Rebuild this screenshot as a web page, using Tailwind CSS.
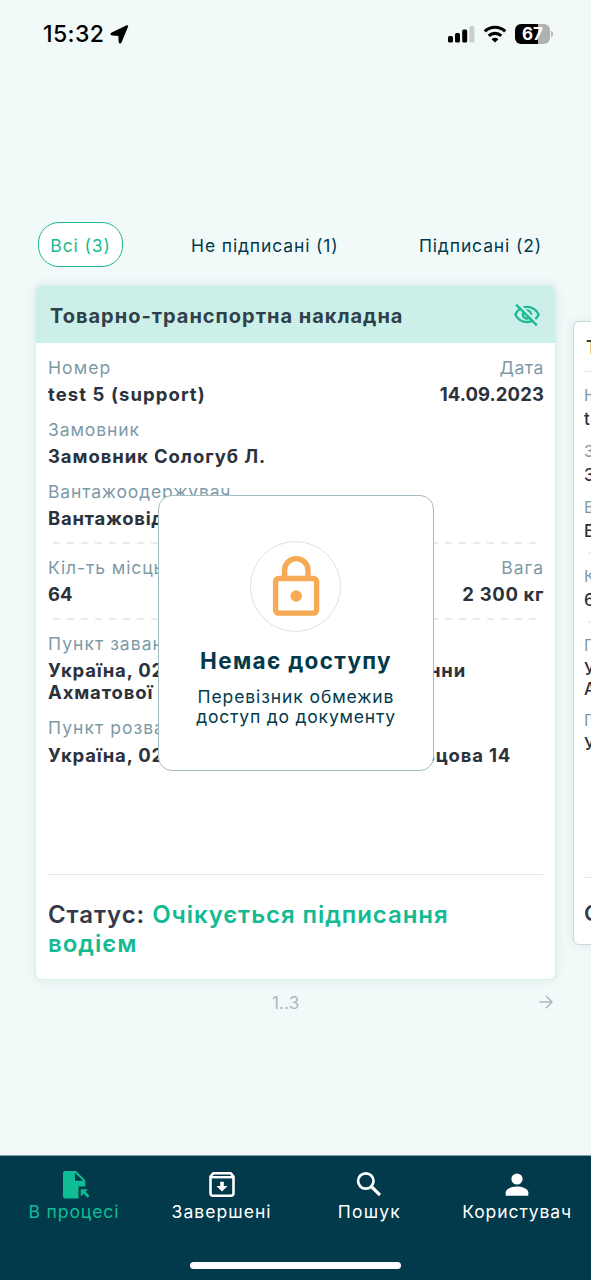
<!DOCTYPE html>
<html lang="uk">
<head>
<meta charset="utf-8">
<title>Документи</title>
<script src="https://cdn.jsdelivr.net/npm/@tailwindcss/browser@4"></script>
</head>
<body class="bg-[#f1faf9]">
<div class="relative flex h-[1280px] w-[591px] flex-col overflow-hidden bg-[#f1faf9] font-[Inter,sans-serif] text-[17.5px] whitespace-nowrap text-[#023a4c]">

  <!-- Status bar -->
  <div class="flex h-[68px] shrink-0 items-center justify-between pr-[38px] pl-[43px] text-black">
    <div class="flex items-center gap-[6px]">
      <span class="text-[23px] font-medium tracking-[0.4px]">15:32</span>
      <svg class="h-[19px] w-[19px]" viewBox="0 0 19 19"><path d="M17.2 1.2 10.7 16.9Q10 18.3 9.6 16.6L9.3 9.9 2.4 9.6Q.6 9.2 2.1 8.4Z" fill="#000" stroke="#000" stroke-width="2" stroke-linejoin="round"/></svg>
    </div>
    <div class="flex items-center">
      <svg class="h-[18px] w-[28px]" viewBox="0 0 28 18"><rect x="1" y="11" width="5" height="6.5" rx="1.5"/><rect x="8" y="8" width="5" height="9.5" rx="1.5"/><rect x="15.2" y="4.5" width="5" height="13" rx="1.5"/><rect x="22.4" y="1" width="5" height="16.5" rx="1.5" fill="#c9cfce"/></svg>
      <svg class="ml-[8px] h-[18px] w-[24px]" viewBox="0 0 24 18" fill="none" stroke="#000" stroke-width="3.2"><path d="M1.8 6.4a14.6 14.6 0 0 1 20.4 0"/><path d="M5.8 10.8a8.9 8.9 0 0 1 12.4 0"/><path d="M12 17.6 8.6 14.2a4.8 4.8 0 0 1 6.8 0Z" fill="#000" stroke="none"/></svg>
      <div class="ml-[8px] flex h-[20px] w-[35px] items-center justify-center rounded-[6px] bg-linear-to-r from-black from-[67%] to-[#aeb3b2] to-[67%] pt-px text-[17px] leading-[19px] font-bold text-white">67</div>
      <div class="ml-px h-[6px] w-[2px] rounded-r-full bg-[#b4bab9]"></div>
    </div>
  </div>

  <!-- Filter tabs -->
  <div class="mt-[154px] ml-[38px] flex h-[45px] w-[508px] shrink-0 items-center tracking-[0.87px]">
    <div class="flex h-[45px] w-[85px] items-center justify-center rounded-[21px] border-[1.5px] border-[#1db992] bg-white pt-[3px] text-[#1abb92]">Всі (3)</div>
    <div class="pt-[3px] pl-[68px]">Не підписані (1)</div>
    <div class="mr-[4px] ml-auto pt-[3px]">Підписані (2)</div>
  </div>

  <!-- Document cards -->
  <div class="mt-[19px] ml-[36px] flex w-[620px] shrink-0 items-start gap-[18px]">
    <div class="relative flex h-[693px] w-[519px] shrink-0 flex-col overflow-visible rounded-[6px] bg-white shadow-[0_0_0_1px_#d8efea,0_0_10px_2px_#dcebe9]">
      <div class="flex h-[57px] shrink-0 items-center justify-between rounded-t-[5px] bg-[#ccf0e9] pt-[2px] pr-[14px] pl-[14px]">
        <span class="text-[20px] font-bold tracking-[0.98px] text-[#30414a]">Товарно-транспортна накладна</span>
        <svg class="-mt-[2px] h-[28px] w-[28px]" viewBox="0 0 24 24" fill="#1abb92"><path d="M12 6c3.79 0 7.17 2.13 8.82 5.5-.59 1.22-1.42 2.27-2.41 3.12l1.41 1.41c1.39-1.23 2.49-2.77 3.18-4.53C21.27 7.11 17 4 12 4c-1.27 0-2.49.2-3.64.57l1.65 1.65C10.66 6.09 11.32 6 12 6zm-1.07 1.14L13 9.21c.57.25 1.03.71 1.28 1.28l2.07 2.07c.08-.34.14-.7.14-1.07C16.5 9.01 14.48 7 12 7c-.37 0-.72.05-1.07.14zM2.01 3.87l2.68 2.68C3.06 7.83 1.77 9.53 1 11.5 2.73 15.89 7 19 12 19c1.52 0 2.98-.29 4.32-.82l3.42 3.42 1.41-1.41L3.42 2.45 2.01 3.87zm7.5 7.5 2.61 2.61c-.04.01-.08.02-.12.02-1.38 0-2.5-1.12-2.5-2.5 0-.05.01-.08.01-.13zm-3.4-3.4 1.75 1.75c-.23.55-.36 1.15-.36 1.78 0 2.48 2.02 4.5 4.5 4.5.63 0 1.23-.13 1.77-.36l.98.98c-.88.24-1.8.38-2.75.38-3.79 0-7.17-2.13-8.82-5.5.7-1.43 1.72-2.61 2.93-3.53z"/></svg>
      </div>

      <div class="flex flex-1 flex-col px-[12px] pt-[11px]">
        <div class="flex justify-between">
          <div class="flex flex-col">
            <span class="leading-[27px] tracking-[1.1px] text-[#7d9aa7]">Номер</span>
            <span class="text-[18.5px] leading-[27px] font-bold tracking-[1.08px] text-[#2c323c]">test 5 (support)</span>
          </div>
          <div class="-mr-px flex flex-col items-end">
            <span class="leading-[27px] tracking-[0.6px] text-[#7d9aa7]">Дата</span>
            <span class="text-[18.5px] leading-[27px] font-bold tracking-[0.1px] text-[#2c323c]">14.09.2023</span>
          </div>
        </div>
        <div class="mt-[8px] flex flex-col">
          <span class="leading-[27px] tracking-[0.9px] text-[#7d9aa7]">Замовник</span>
          <span class="text-[18.5px] leading-[27px] font-bold tracking-[0.9px] text-[#2c323c]">Замовник Сологуб Л.</span>
        </div>
        <div class="mt-[8px] flex flex-col">
          <span class="leading-[27px] tracking-[0.85px] text-[#7d9aa7]">Вантажоодержувач</span>
          <span class="text-[18.5px] leading-[27px] font-bold tracking-[0.7px] text-[#2c323c]">Вантажовідправник</span>
        </div>
        <svg class="mt-[10px] h-[2px] w-full shrink-0"><line x1="5" y1="1" x2="496" y2="1" stroke="#e1e4e6" stroke-width="1.3" stroke-dasharray="7 7"/></svg>
        <div class="mt-[10px] flex justify-between">
          <div class="flex flex-col">
            <span class="leading-[27px] tracking-[0.9px] text-[#7d9aa7]">Кіл-ть місць</span>
            <span class="text-[18.5px] leading-[27px] font-bold text-[#2c323c]">64</span>
          </div>
          <div class="-mr-px flex flex-col items-end">
            <span class="leading-[27px] tracking-[1px] text-[#7d9aa7]">Вага</span>
            <span class="text-[18.5px] leading-[27px] font-bold tracking-[0.65px] text-[#2c323c]">2 300 кг</span>
          </div>
        </div>
        <svg class="mt-[10px] h-[2px] w-full shrink-0"><line x1="5" y1="1" x2="496" y2="1" stroke="#e1e4e6" stroke-width="1.3" stroke-dasharray="7 7"/></svg>
        <div class="mt-[10px] flex flex-col">
          <span class="leading-[27px] tracking-[1.05px] text-[#7d9aa7]">Пункт завантаження</span>
          <span class="mt-[2px] flex w-[418px] justify-between text-[18.5px] leading-[22px] font-bold tracking-[0.8px] text-[#2c323c]"><span>Україна, 02068, Київ,</span><span>вул. Анни</span></span>
          <span class="text-[18.5px] leading-[22px] font-bold tracking-[0.85px] text-[#2c323c]">Ахматової</span>
        </div>
        <div class="mt-[11px] flex flex-col">
          <span class="leading-[27px] tracking-[1.05px] text-[#7d9aa7]">Пункт розвантаження</span>
          <span class="mt-[3px] flex w-[463px] justify-between text-[18.5px] leading-[22px] font-bold tracking-[0.8px] text-[#2c323c]"><span>Україна, 02068, Київ,</span><span>Кільцова 14</span></span>
        </div>
        <div class="mt-auto h-[105px] border-t-[1.5px] border-[#e3e7e8] pt-[25px] text-[24px] leading-[29px] font-semibold tracking-[0.93px] text-[#33394a]">
          Статус: <span class="text-[#13ba92]">Очікується підписання<br><span class="tracking-[1px]">водієм</span></span>
        </div>
      </div>

      <!-- Access notice -->
      <div class="absolute top-[209px] left-[121.5px] flex h-[276px] w-[276px] flex-col items-center rounded-[14px] border-[1.5px] border-[#a3bcc4] bg-white pt-[45px]">
        <div class="flex h-[91px] w-[91px] shrink-0 items-center justify-center rounded-full border border-[#dce2e3]">
          <svg class="-mt-[2px] h-[62px] w-[48px]" viewBox="0 0 48 62" fill="none" stroke="#f6aa55" stroke-width="5.4"><rect x="3.6" y="23.5" width="41" height="34.6" rx="3"/><path d="M12.6 23V15.3a11.7 11.7 0 0 1 23.4 0V23"/><circle cx="24.2" cy="41" r="5.8" fill="#f6aa55" stroke="none"/></svg>
        </div>
        <div class="mt-[15px] pl-px text-[22.5px] leading-[28px] font-bold tracking-[1.35px]">Немає доступу</div>
        <div class="mt-[12px] pl-px text-center leading-[19.5px] tracking-[0.9px]">Перевізник обмежив<br><span class="tracking-[0.8px]">доступ до документу</span></div>
      </div>
    </div>

    <!-- Next card, partly visible -->
    <div class="mt-[35px] flex h-[624px] w-[300px] shrink-0 flex-col rounded-[6px] border-[1.5px] border-[#ccd7d9] bg-white pl-[10px] shadow-[0_0_8px_1px_#e0ebea]">
      <div class="h-[50px] border-b border-[#e0e4e6] pl-[2px] text-[18px] leading-[52px] font-semibold text-[#30414a]">Товарно</div>
      <div class="mt-[11px] text-[16px] leading-[24px] text-[#7d9aa7]">Номер</div>
      <div class="text-[17px] leading-[25px] font-medium tracking-[2px] text-[#2c323c]">test 5</div>
      <div class="mt-[7px] text-[16px] leading-[24px] text-[#7d9aa7]">Замовник</div>
      <div class="text-[17px] leading-[25px] font-medium text-[#2c323c]">Замовник</div>
      <div class="mt-[7px] text-[16px] leading-[24px] text-[#7d9aa7]">Вантажо</div>
      <div class="text-[17px] leading-[25px] font-medium text-[#2c323c]">Вантажо</div>
      <svg class="mt-[8px] h-[2px] w-full shrink-0"><line x1="4" y1="1" x2="280" y2="1" stroke="#d9dddf" stroke-dasharray="6 6"/></svg>
      <div class="mt-[10px] text-[16px] leading-[24px] text-[#7d9aa7]">Кіл-ть</div>
      <div class="text-[17px] leading-[25px] font-medium text-[#2c323c]">64</div>
      <svg class="mt-[8px] h-[2px] w-full shrink-0"><line x1="4" y1="1" x2="280" y2="1" stroke="#d9dddf" stroke-dasharray="6 6"/></svg>
      <div class="mt-[10px] text-[16px] leading-[24px] text-[#7d9aa7]">Пункт</div>
      <div class="mt-[2px] text-[17px] leading-[20px] font-medium text-[#2c323c]">Україна<br>Ахматової</div>
      <div class="mt-[9px] text-[16px] leading-[24px] text-[#7d9aa7]">Пункт</div>
      <div class="mt-[2px] text-[17px] leading-[20px] font-medium text-[#2c323c]">Україна</div>
      <div class="mt-auto h-[67px] border-t-[1.5px] border-[#e3e7e8] pt-[21px] text-[22px] leading-[28px] font-semibold text-[#33394a]">Статус</div>
    </div>
  </div>

  <!-- Pager -->
  <div class="mt-[11px] flex h-[24px] shrink-0 items-center justify-between pr-[38px] pl-[272px] text-[#a9bbc0]">
    <span class="pt-[3px] text-[17px] tracking-[0.2px]">1..3</span>
    <svg class="h-[14px] w-[14px]" viewBox="0 0 14 14" fill="none" stroke="#a9bbc0" stroke-width="1.6" stroke-linecap="round" stroke-linejoin="round"><path d="M1 7h12M7.3 1.3 13 7l-5.7 5.7"/></svg>
  </div>

  <!-- Bottom navigation -->
  <div class="mt-auto flex h-[125px] shrink-0 flex-col items-center border-t border-[#7d9fa5] bg-[#023a4c] text-white">
    <div class="grid h-[70px] w-full grid-cols-4 pt-[14px] leading-[24px]">
      <div class="flex flex-col items-center text-[#0fbd95]">
        <svg class="ml-[4px] h-[30px] w-[28px]" viewBox="0 0 28 30" fill="#0fbd95"><path fill-rule="evenodd" d="M3.2 1H14L23.3 10.3V16.5H16.5V28.5H3.2Q1 28.5 1 26.3V3.2Q1 1 3.2 1ZM13 3V10.8H21.2Z"/><path d="M18.8 19.3H26L23.6 21.7 27.5 25.8 25.6 27.7 21.6 23.7 18.8 26.5Z"/></svg>
        <span class="tracking-[0.9px]">В процесі</span>
      </div>
      <div class="flex flex-col items-center">
        <svg class="h-[30px] w-[28px]" viewBox="0 0 28 30" fill="none" stroke="#fff" stroke-width="2.6"><path d="M2.5 6.5 5.2 3.3H22.8L25.5 6.5V23Q25.5 25.8 22.7 25.8H5.3Q2.5 25.8 2.5 23Z" stroke-linejoin="round"/><path d="M2.5 7.2H25.5" stroke-width="2.4"/><path d="M12.2 11.8H15.8V16H19.5L14 21.5 8.5 16H12.2Z" fill="#fff" stroke="none"/></svg>
        <span class="tracking-[1.05px]">Завершені</span>
      </div>
      <div class="flex flex-col items-center">
        <svg class="h-[30px] w-[28px]" viewBox="0 0 28 30" fill="none" stroke="#fff" stroke-width="2.7"><circle cx="10.8" cy="11" r="7.7"/><path d="M16.3 16.5 25 25.2" stroke-width="3.2"/></svg>
        <span class="tracking-[1.3px]">Пошук</span>
      </div>
      <div class="flex flex-col items-center">
        <svg class="h-[30px] w-[28px]" viewBox="0 0 28 30" fill="#fff"><circle cx="14" cy="9" r="5.6"/><path d="M2.7 25.7V22.3C2.7 18.5 10 16.5 14 16.5S25.3 18.5 25.3 22.3V25.7Z"/></svg>
        <span class="tracking-[0.9px]">Користувач</span>
      </div>
    </div>
    <div class="mt-[36px] h-[7px] w-[211px] rounded-full bg-white"></div>
  </div>
</div>
</body>
</html>
